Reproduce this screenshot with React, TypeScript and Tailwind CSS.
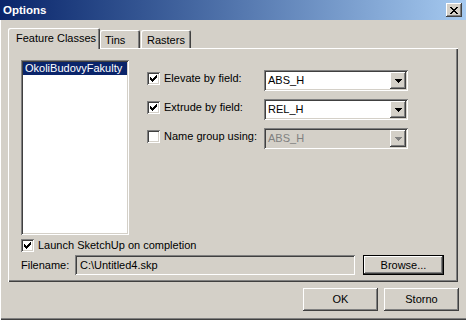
import React from "react";

const raised =
  "shadow-[inset_-1px_-1px_#404040,inset_1px_1px_#ffffff,inset_-2px_-2px_#808080,inset_2px_2px_#d4d0c8]";
const sunken =
  "shadow-[inset_1px_1px_#808080,inset_-1px_-1px_#ffffff,inset_2px_2px_#404040,inset_-2px_-2px_#d4d0c8]";

const checkRows = ["......x", ".....xx", "x...xxx", "xx.xxx.", "xxxxx..", ".xxx...", "..x...."];
const closeRows = ["xx....xx", ".xx..xx.", "..xxxx..", "...xx...", "..xxxx..", ".xx..xx.", "xx....xx"];

const Pixels = ({ rows, color }: { rows: string[]; color: string }) => (
  <svg width={rows[0].length} height={rows.length} shapeRendering="crispEdges" className="block">
    {rows.map((row, y) =>
      row.split("").map((c, x) => (c === "x" ? <rect key={`${x}-${y}`} x={x} y={y} width={1} height={1} fill={color} /> : null))
    )}
  </svg>
);

const Checkbox = ({ checked }: { checked: boolean }) => (
  <div className={`w-[13px] h-[13px] shrink-0 bg-white flex items-center justify-center ${sunken}`}>
    {checked && <Pixels rows={checkRows} color="#000000" />}
  </div>
);

const Arrow = ({ color }: { color: string }) => (
  <Pixels rows={["xxxxxxx", ".xxxxx.", "..xxx..", "...x..."]} color={color} />
);

const Combo = ({ value, disabled }: { value: string; disabled?: boolean }) => (
  <div className={`w-[144px] h-[21px] flex items-center justify-between pl-[4px] pr-[2px] ${sunken} ${disabled ? "bg-[#d4d0c8] text-[#808080]" : "bg-white text-black"}`}>
    <span>{value}</span>
    <div className={`w-[16px] h-[17px] bg-[#d4d0c8] flex items-center justify-center ${raised}`}>
      <Arrow color={disabled ? "#808080" : "#000000"} />
    </div>
  </div>
);

const FieldRow = ({ label, checked, value, disabled }: { label: string; checked: boolean; value: string; disabled?: boolean }) => (
  <div className="flex items-start h-[21px]">
    <div className="flex items-center mt-[2px] h-[13px]">
      <Checkbox checked={checked} />
      <span className="ml-[4px] w-[100px]">{label}</span>
    </div>
    <Combo value={value} disabled={disabled} />
  </div>
);

const Button = ({ label, isDefault, className }: { label: string; isDefault?: boolean; className: string }) => (
  <div className={`flex items-center justify-center bg-[#d4d0c8] ${raised} ${isDefault ? "border border-black" : ""} ${className}`}>
    {label}
  </div>
);

export default function App() {
  return (
    <div
      className="w-[466px] h-[320px] bg-[#d4d0c8] flex flex-col text-[11px] leading-[13px] text-black shadow-[inset_1px_0_#ffffff,inset_0_-1px_#404040,inset_0_-2px_#808080]"
      style={{ fontFamily: '"Liberation Sans", Arial, sans-serif' }}
    >
      <div className="h-[20px] shrink-0 flex items-center justify-between pl-[3px] pr-[4px] bg-linear-to-r from-[#0a246a] to-[#a6caf0]">
        <span className="text-white font-bold text-[11.5px]">Options</span>
        <div className={`w-[16px] h-[14px] bg-[#d4d0c8] flex items-center justify-center ${raised}`}>
          <Pixels rows={closeRows} color="#000000" />
        </div>
      </div>

      <div className="px-[8px] pt-[8px]">
        <div className="flex items-end h-[20px]">
          <div className="relative z-10 w-[92px] h-[21px] mb-[-1px] pl-[8px] pt-[4px] bg-[#d4d0c8] rounded-t-[2px] shadow-[inset_1px_1px_#ffffff,inset_-1px_0_#404040,inset_-2px_0_#808080]">
            Feature Classes
          </div>
          <div className="w-[40px] h-[18px] pl-[5px] pt-[4px] rounded-t-[2px] shadow-[inset_1px_1px_#ffffff,inset_-1px_0_#404040,inset_-2px_0_#808080]">
            Tins
          </div>
          <div className="w-[50px] h-[18px] ml-[1px] pl-[6px] pt-[4px] rounded-t-[2px] shadow-[inset_1px_1px_#ffffff,inset_-1px_0_#404040,inset_-2px_0_#808080]">
            Rasters
          </div>
        </div>

        <div className="h-[234px] pl-[13px] pt-[12px] shadow-[inset_1px_1px_#ffffff,inset_-1px_-1px_#404040,inset_-2px_-2px_#808080]">
          <div className="flex">
            <div className={`w-[108px] h-[175px] bg-white p-[2px] ${sunken}`}>
              <div className="h-[13px] bg-[#0a246a] text-white pl-[2px]">OkoliBudovyFakulty</div>
            </div>
            <div className="ml-[18px] mt-[10px] flex flex-col gap-[8px]">
              <FieldRow label="Elevate by field:" checked value="ABS_H" />
              <FieldRow label="Extrude by field:" checked value="REL_H" />
              <FieldRow label="Name group using:" checked={false} value="ABS_H" disabled />
            </div>
          </div>

          <div className="flex items-center h-[13px] mt-[4px]">
            <Checkbox checked />
            <span className="ml-[4px]">Launch SketchUp on completion</span>
          </div>

          <div className="flex items-center mt-[3px]">
            <span className="w-[54px]">Filename:</span>
            <div className={`w-[280px] h-[20px] flex items-center pl-[5px] bg-[#d4d0c8] ${sunken}`}>C:\Untitled4.skp</div>
            <Button label="Browse..." isDefault className="ml-[8px] w-[81px] h-[20px]" />
          </div>
        </div>
      </div>

      <div className="flex justify-end gap-[6px] pr-[7px] mt-[6px]">
        <Button label="OK" className="w-[75px] h-[23px]" />
        <Button label="Storno" className="w-[75px] h-[23px]" />
      </div>
    </div>
  );
}
